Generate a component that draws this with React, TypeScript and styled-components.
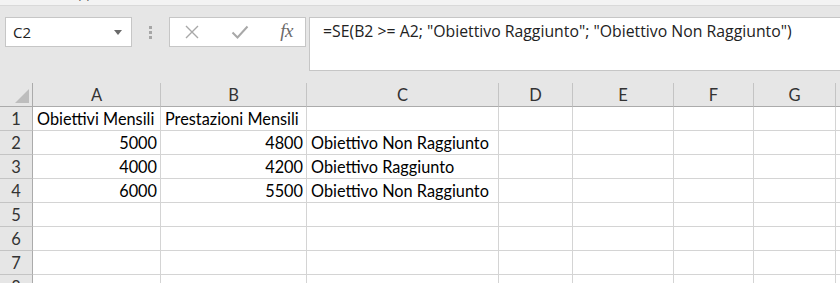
import React from "react";
import styled, { createGlobalStyle } from "styled-components";

const Global = createGlobalStyle`
  html, body { margin: 0; padding: 0; background: #e6e6e6; overflow: hidden; }
  body { width: 840px; height: 283px; }
`;

const Page = styled.div`
  width: 840px;
  height: 283px;
  background: #e6e6e6;
  display: flex;
  flex-direction: column;
  overflow: hidden;
  & > * { flex-shrink: 0; }
`;

const TopStrip = styled.div`
  height: 5px;
  background: #f3f3f3;
  border-bottom: 1px solid #d9d9d9;
  overflow: hidden;
  padding-left: 70px;
`;

const RibbonLabel = styled.span`
  display: block;
  margin-top: -15px;
  font-family: "Open Sans", sans-serif;
  font-size: 13px;
  line-height: 16px;
  color: #555;
`;

const FormulaRow = styled.div`
  display: flex;
  align-items: flex-start;
  padding: 11px 0 0 5px;
  height: 54px;
`;

const NameBox = styled.div`
  width: 127px;
  height: 30px;
  box-sizing: border-box;
  background: #fff;
  border: 1px solid #c6c6c6;
  display: flex;
  align-items: center;
  justify-content: space-between;
  padding: 0 9px 0 7px;
  font-family: "Open Sans", sans-serif;
  font-size: 15px;
  color: #222;
`;

const Arrow = styled.span`
  width: 0;
  height: 0;
  border-left: 4px solid transparent;
  border-right: 4px solid transparent;
  border-top: 5px solid #6a6a6a;
`;

const Grip = styled.div`
  width: 37px;
  height: 30px;
  display: flex;
  flex-direction: column;
  align-items: center;
  justify-content: center;
  gap: 2px;
`;

const Dot = styled.span`
  width: 3px;
  height: 3px;
  background: #a6a6a6;
`;

const Buttons = styled.div`
  width: 137px;
  height: 30px;
  box-sizing: border-box;
  background: #fff;
  border: 1px solid #c6c6c6;
  display: flex;
  align-items: center;
  justify-content: space-between;
  padding: 0 12px 0 14px;
`;

const Fx = styled.span`
  font-family: "Liberation Serif", serif;
  font-style: italic;
  font-size: 19px;
  color: #6a6a6a;
  letter-spacing: -0.5px;
  margin-top: -2px;
`;

const FormulaBox = styled.div`
  flex: 1;
  margin-left: 3px;
  height: 54px;
  box-sizing: border-box;
  background: #fff;
  border: 1px solid #c6c6c6;
  border-right: none;
  padding: 3px 0 0 13px;
  font-family: "Open Sans", sans-serif;
  font-size: 15.8px;
  line-height: 20px;
  color: #222;
  white-space: nowrap;
`;

const Sheet = styled.div`
  margin-top: 12px;
  display: grid;
  grid-template-columns: 33px 128px 146px 192px 74px 101px 80px 82px 1fr;
  grid-auto-rows: 24px;
  background: #fff;
`;

const Corner = styled.div`
  background: #e6e6e6;
  border-right: 1px solid #ababab;
  border-bottom: 1px solid #ababab;
  display: flex;
  align-items: flex-end;
  justify-content: flex-end;
  padding: 0 3px 3px 0;
`;

const ColHead = styled.div`
  background: #e6e6e6;
  border-right: 1px solid #c4c4c4;
  border-bottom: 1px solid #ababab;
  display: flex;
  align-items: center;
  justify-content: center;
  font-family: Lato, sans-serif;
  font-size: 16.5px;
  color: #333;
`;

const RowHead = styled.div`
  background: #e6e6e6;
  border-right: 1px solid #ababab;
  border-bottom: 1px solid #c4c4c4;
  display: flex;
  align-items: center;
  justify-content: center;
  font-family: Lato, sans-serif;
  font-size: 16.5px;
  color: #333;
`;

const Cell = styled.div<{ $num?: boolean }>`
  border-right: 1px solid #d4d4d4;
  border-bottom: 1px solid #d4d4d4;
  display: flex;
  align-items: center;
  justify-content: ${(p) => (p.$num ? "flex-end" : "flex-start")};
  padding: ${(p) => (p.$num ? "0 3px 0 0" : "0 0 0 4px")};
  font-family: Lato, sans-serif;
  font-size: 16.3px;
  color: #000;
  white-space: nowrap;
  min-width: 0;
`;

const cols = ["A", "B", "C", "D", "E", "F", "G", ""];

type Val = { t: string; num?: boolean };
const data: Val[][] = [
  [{ t: "Obiettivi Mensili" }, { t: "Prestazioni Mensili" }, { t: "" }],
  [{ t: "5000", num: true }, { t: "4800", num: true }, { t: "Obiettivo Non Raggiunto" }],
  [{ t: "4000", num: true }, { t: "4200", num: true }, { t: "Obiettivo Raggiunto" }],
  [{ t: "6000", num: true }, { t: "5500", num: true }, { t: "Obiettivo Non Raggiunto" }],
  [], [], [], [],
];

export default function App() {
  return (
    <Page>
      <Global />
      <TopStrip>
        <RibbonLabel>Appunti</RibbonLabel>
      </TopStrip>
      <FormulaRow>
        <NameBox>
          <span>C2</span>
          <Arrow />
        </NameBox>
        <Grip>
          <Dot />
          <Dot />
          <Dot />
        </Grip>
        <Buttons>
          <svg width="16" height="16" viewBox="0 0 16 16">
            <path d="M2 2 L14 14 M14 2 L2 14" stroke="#a8a8a8" strokeWidth="1.4" fill="none" />
          </svg>
          <svg width="18" height="16" viewBox="0 0 18 16">
            <path d="M1.5 8.5 L6.5 13.5 L16.5 2.5" stroke="#a8a8a8" strokeWidth="2" fill="none" />
          </svg>
          <Fx>fx</Fx>
        </Buttons>
        <FormulaBox>=SE(B2 &gt;= A2; "Obiettivo Raggiunto"; "Obiettivo Non Raggiunto")</FormulaBox>
      </FormulaRow>
      <Sheet>
        <Corner>
          <svg width="14" height="14" viewBox="0 0 14 14">
            <path d="M14 0 L14 14 L0 14 Z" fill="#bdbdbd" />
          </svg>
        </Corner>
        {cols.map((c, i) => (
          <ColHead key={i}>{c}</ColHead>
        ))}
        {data.map((row, r) => (
          <React.Fragment key={r}>
            <RowHead>{r + 1}</RowHead>
            {cols.map((_, ci) => {
              const v = row[ci];
              return (
                <Cell key={ci} $num={v?.num}>
                  {v?.t}
                </Cell>
              );
            })}
          </React.Fragment>
        ))}
      </Sheet>
    </Page>
  );
}
